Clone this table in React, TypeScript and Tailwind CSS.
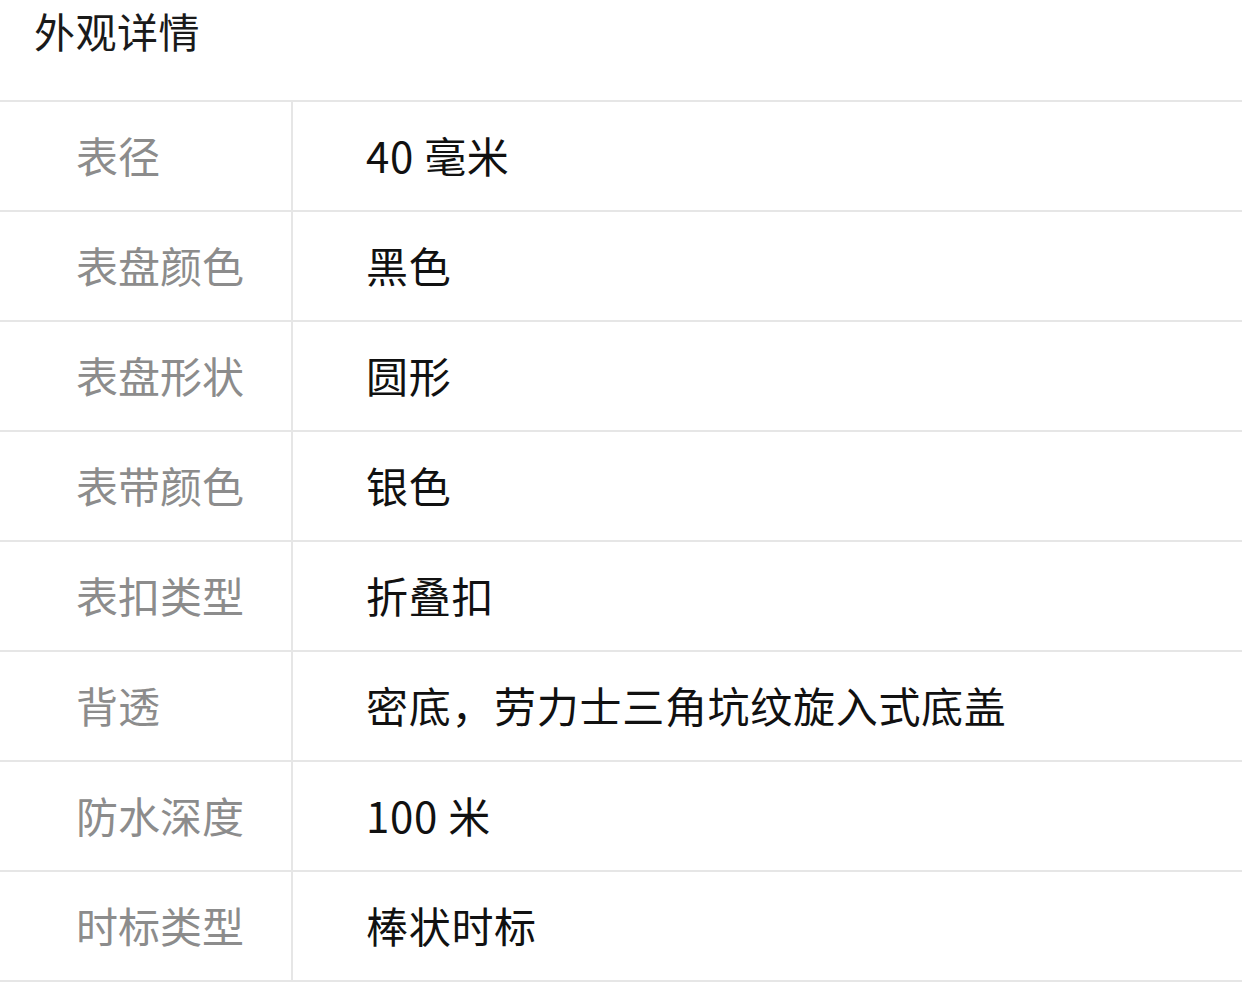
const rows: { label: string; value: string }[] = [
  { label: "表径", value: "40 毫米" },
  { label: "表盘颜色", value: "黑色" },
  { label: "表盘形状", value: "圆形" },
  { label: "表带颜色", value: "银色" },
  { label: "表扣类型", value: "折叠扣" },
  { label: "背透", value: "密底，劳力士三角坑纹旋入式底盖" },
  { label: "防水深度", value: "100 米" },
  { label: "时标类型", value: "棒状时标" },
];

const App = () => {
  return (
    <div
      className="w-[1242px] h-[984px] bg-white overflow-hidden"
      style={{ fontFamily: '"Noto Sans CJK SC", "Noto Sans", sans-serif' }}
    >
      <div className="h-[100px] pl-[34px]">
        <div className="text-[41px] leading-[60px] tracking-[0.5px] text-[#1a1a1a]">
          外观详情
        </div>
      </div>
      <div className="border-b-2 border-[#e6e6e6]">
        {rows.map(row => (
          <div
            key={row.label}
            className="flex h-[110px] border-t-2 border-[#e6e6e6]"
          >
            <div className="w-[293px] shrink-0 border-r-2 border-[#e6e6e6] pl-[76px] pb-[3px] flex items-center text-[42px] text-[#8c8c8c]">
              {row.label}
            </div>
            <div className="flex-1 pl-[73px] pb-[3px] flex items-center text-[42px] tracking-[0.7px] text-[#111111] whitespace-pre">
              {row.value}
            </div>
          </div>
        ))}
      </div>
    </div>
  );
};

export default App;
